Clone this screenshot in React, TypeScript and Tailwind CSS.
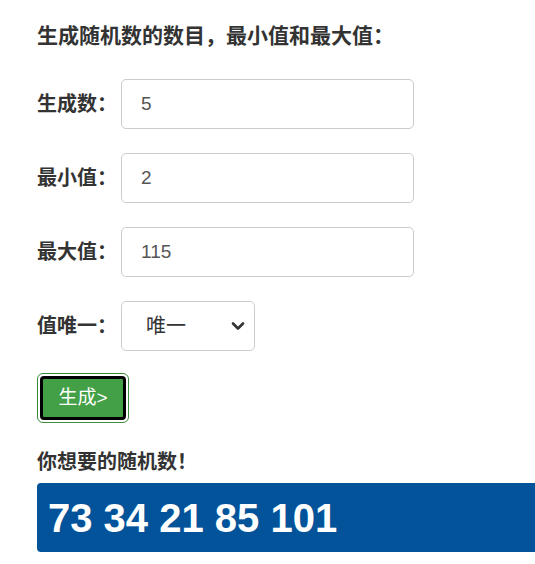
import React, { useState } from 'react';

const font = { fontFamily: '"Liberation Sans", "Noto Sans CJK SC", sans-serif' };

const fields = [
  { label: '生成数：', value: '5' },
  { label: '最小值：', value: '2' },
  { label: '最大值：', value: '115' },
];

const App: React.FC = () => {
  const [values, setValues] = useState(fields.map((f) => f.value));

  return (
    <div className="min-h-screen w-[535px] overflow-hidden bg-white pl-[37px] pt-[22px] text-[#333]" style={font}>
      <h3 className="mb-[29px] text-[21px] font-bold leading-[28px]">生成随机数的数目，最小值和最大值：</h3>

      {fields.map((f, i) => (
        <div key={f.label} className="mb-[24px] flex items-center">
          <label className="w-[84px] text-[20px] font-bold leading-[28px]">{f.label}</label>
          <input
            value={values[i]}
            onChange={(e) => setValues(values.map((v, j) => (j === i ? e.target.value : v)))}
            className="h-[50px] w-[293px] rounded-[5px] border border-[#ccc] bg-white pl-[19px] text-[19px] text-[#555] outline-none"
          />
        </div>
      ))}

      <div className="mb-[22px] flex items-center">
        <label className="w-[84px] text-[20px] font-bold leading-[28px]">值唯一：</label>
        <div className="relative">
          <select className="h-[50px] w-[134px] appearance-none rounded-[5px] border border-[#ccc] bg-white pl-[24px] text-[20px] text-[#333] outline-none">
            <option>唯一</option>
            <option>不唯一</option>
          </select>
          <svg
            className="pointer-events-none absolute right-[10px] top-1/2 -translate-y-1/2"
            width="14"
            height="10"
            viewBox="0 0 14 10"
          >
            <path d="M2 2.5 L7 7.5 L12 2.5" fill="none" stroke="#333" strokeWidth="2.6" strokeLinecap="round" strokeLinejoin="round" />
          </svg>
        </div>
      </div>

      <div className="mb-[25px] inline-block rounded-[6px] border border-[#3c8a3c] bg-white p-[2px]">
        <button className="block h-[44px] w-[86px] rounded-[4px] border-[3px] border-black bg-[#43a047] text-[19px] text-white">
          生成&gt;
        </button>
      </div>

      <p className="mb-[7px] text-[20px] font-bold leading-[28px]">你想要的随机数！</p>

      <div className="flex h-[69px] w-[520px] items-center rounded-[4px] bg-[#02539a] pl-[11px]">
        <span className="text-[40px] font-bold leading-none text-white">73 34 21 85 101</span>
      </div>
    </div>
  );
};

export default App;
